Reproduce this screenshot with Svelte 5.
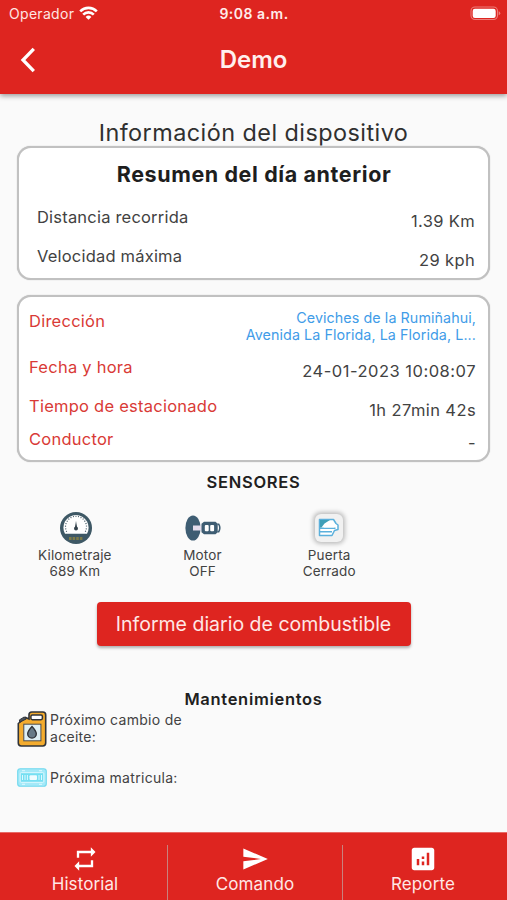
<script>
  const summary = [
    { label: 'Distancia recorrida', value: '1.39 Km' },
    { label: 'Velocidad máxima', value: '29 kph' }
  ];
  const details = [
    { label: 'Fecha y hora', value: '24-01-2023 10:08:07', cls: 'date' },
    { label: 'Tiempo de estacionado', value: '1h 27min 42s', cls: 'time' },
    { label: 'Conductor', value: '-', cls: 'driver' }
  ];
</script>

<div class="screen">
  <header>
    <div class="status">
      <div class="carrier">
        <span>Operador</span>
        <svg width="19" height="14" viewBox="0 0 19 14" fill="none" stroke="#fff" stroke-width="2.6">
          <path d="M1.2 5.3a11.7 11.7 0 0 1 16.6 0" />
          <path d="M4.2 8.6a7.5 7.5 0 0 1 10.6 0" />
          <path d="M9.5 13.8 6.6 10.9a4.1 4.1 0 0 1 5.8 0Z" fill="#fff" stroke="none" />
        </svg>
      </div>
      <div class="clock">9:08 a.m.</div>
      <div class="battery">
        <svg width="31" height="15" viewBox="0 0 31 15">
          <rect x="1" y="1" width="26.5" height="12.5" rx="4" fill="none" stroke="#ec7d79" stroke-width="1.1" />
          <rect x="2.7" y="2.7" width="23" height="9.2" rx="2.2" fill="#fff" />
          <path d="M28.7 5.2q1.6.7 1.6 2t-1.6 2Z" fill="#ec7d79" />
        </svg>
      </div>
    </div>
    <div class="appbar">
      <svg width="18" height="26" viewBox="0 0 18 26" fill="none" stroke="#fff" stroke-width="3.3">
        <path d="M14.8 1.8 4 13l10.8 11.2" />
      </svg>
      <h1>Demo</h1>
      <span></span>
    </div>
  </header>

  <main>
    <h2 class="title">Información del dispositivo</h2>

    <section class="card summary">
      <h3>Resumen del día anterior</h3>
      {#each summary as row}
        <div class="row"><span class="label">{row.label}</span><span class="value">{row.value}</span></div>
      {/each}
    </section>

    <section class="card details">
      <div class="row address">
        <span class="label">Dirección</span>
        <span class="link">Ceviches de la Rumiñahui,<br />Avenida La Florida, La Florida, L...</span>
      </div>
      {#each details as row}
        <div class="row {row.cls}"><span class="label">{row.label}</span><span class="value">{row.value}</span></div>
      {/each}
    </section>

    <h4 class="sensors-title">SENSORES</h4>
    <section class="sensors">
      <div class="sensor">
        <svg width="34" height="34" viewBox="0 0 34 34">
          <circle cx="17" cy="17" r="16" fill="#3e5865" />
          <path d="M6 22.8a12.6 12.6 0 1 1 22 0Z" fill="#fff" />
          <path d="M7.7 20.7a10.5 10.5 0 1 1 18.6 0" fill="none" stroke="#455a65" stroke-width="1.2" stroke-dasharray="1 1.6" />
          <path d="m17 10-1.2 7h2.4Z" fill="#35434d" />
          <circle cx="17" cy="17.5" r="2" fill="#35434d" />
          <path d="M10 27.6h14" stroke="#7c7a48" stroke-width="3" stroke-dasharray="2.6 1" />
        </svg>
        <span class="odometer">Kilometraje<br />689 Km</span>
      </div>
      <div class="sensor">
        <svg width="38" height="34" viewBox="0 0 38 34">
          <ellipse cx="9" cy="17" rx="7.6" ry="12.6" fill="#3e5d73" />
          <path d="M9 14.500h8.800v5H9Z" fill="#e4dcec" />
          <path d="M20 10.700h11.500l2.200 2v8.600l-2.200 2H20l-2.500-2v-8.600Z" fill="#3e5d73" />
          <path d="M33.500 13.200h1.200q2.300 3.800 0 7.600h-1.200" fill="none" stroke="#3e5d73" stroke-width="1.5" />
          <rect x="20.800" y="14" width="3.900" height="6.3" rx="1" fill="#fff" />
          <rect x="26.200" y="14" width="3.900" height="6.3" rx="1" fill="#fff" />
        </svg>
        <span>Motor<br />OFF</span>
      </div>
      <div class="sensor">
        <div class="door">
          <svg width="22" height="20" viewBox="0 0 22 20" fill="none" stroke="#5bb0dc" stroke-width="1.5" stroke-linejoin="round">
            <path d="M1.500 1.500H15.500L18 5.500l2 1.500v4.500l-3.500 1L14 17.500H1.500Z" fill="#fff" />
            <path d="M1.500 10.300H17.500M1.500 13.700H14" />
            <path d="M2 2H12L6.500 5.500 3.500 9.500H2Z" fill="#3f9fb8" stroke="none" />
            <path d="M5.500 9.500 9.500 5.500H13.500L16.500 9.500Z" fill="#fff" stroke="none" />
          </svg>
        </div>
        <span>Puerta<br />Cerrado</span>
      </div>
    </section>

    <button>Informe diario de combustible</button>

    <h4 class="maint-title">Mantenimientos</h4>
    <div class="maint oil">
      <svg width="30" height="36" viewBox="0 0 30 36">
        <path d="M1.3 12.5 8.5 6.5 12 8V3.8q0-2.8 2.8-2.8h11q2.9 0 2.9 2.9v28.2q0 2.9-2.9 2.9H4.2q-2.9 0-2.9-2.9Z" fill="#f4ac2e" stroke="#30343a" stroke-width="1.6" />
        <rect x="13.9" y="4" width="11.5" height="4.7" rx="1.4" fill="#fff" stroke="#30343a" stroke-width="1.5" />
        <path d="m2.4 8.9 5-3 2 2-6.7 3.3Z" fill="#4b535d" stroke="#30343a" />
        <rect x="6.8" y="13.2" width="17.1" height="16.6" fill="#dff0f5" stroke="#4a4d50" stroke-width="1" />
        <path d="M15 15.500q-4.3 4.600-4.3 7.300a4.3 4.3 0 0 0 8.6 0Q19.300 20.100 15 15.500Z" fill="#687b88" stroke="#30343a" stroke-width="1.4" />
      </svg>
      <span>Próximo cambio de<br />aceite:</span>
    </div>
    <div class="maint plate">
      <svg width="30" height="19" viewBox="0 0 30 19">
        <rect x=".7" y=".7" width="28.6" height="17.6" rx="2.6" fill="#a4e9f8" stroke="#71d9ee" stroke-width="1.1" />
        <rect x="3.2" y="4.7" width="23.6" height="9.600" rx="1" fill="#75dff2" stroke="#e8fbff" stroke-width=".9" />
        <path d="M5.500 7v5M8 7v5M10.400 7v5M22 7v5M24.500 7v5M5 2.700h3M22 2.700h3M5 16.300h3M22 16.300h3" stroke="#dff9ff" stroke-width="1" />
        <rect x="12.500" y="7.200" width="7.500" height="4.800" rx="1" fill="#effcff" />
      </svg>
      <span>Próxima matricula:</span>
    </div>
  </main>

  <nav>
    <div class="tab">
      <svg width="28" height="28" viewBox="0 0 24 24" fill="#fff"><path d="M7 7h10v3l4-4-4-4v3H5v6h2V7zm10 10H7v-3l-4 4 4 4v-3h12v-6h-2v4z" /></svg>
      <span>Historial</span>
    </div>
    <div class="tab">
      <svg width="28" height="28" viewBox="0 0 24 24" fill="#fff"><path d="M2.010 21 23 12 2.010 3 2 10l15 2-15 2z" /></svg>
      <span>Comando</span>
    </div>
    <div class="tab">
      <svg width="30" height="30" viewBox="0 0 24 24" fill="#fff"><path d="M19 3H5c-1.100 0-2 .9-2 2v14c0 1.100.9 2 2 2h14c1.100 0 2-.9 2-2V5c0-1.100-.9-2-2-2zM9 17H7v-5h2v5zm4 0h-2v-3h2v3zm0-5h-2v-2h2v2zm4 5h-2V7h2v10z" /></svg>
      <span>Reporte</span>
    </div>
  </nav>
</div>

<style>
  :global(body) { margin: 0; }
  .screen {
    width: 507px;
    height: 900px;
    display: flex;
    flex-direction: column;
    overflow: hidden;
    background: #fafafa;
    color: #424242;
    font-family: Inter, "Liberation Sans", sans-serif;
    white-space: nowrap;
  }
  svg { display: block; flex: none; }
  h1, h2, h3, h4 { margin: 0; }
  header {
    height: 94px;
    flex: none;
    background: #de2520;
    color: #fff;
    box-shadow: 0 2px 5px rgba(0, 0, 0, .38);
  }
  .status {
    display: grid;
    grid-template-columns: 1fr auto 1fr;
    align-items: center;
    height: 28px;
    padding: 0 6px 0 9px;
    font-size: 14px;
    line-height: 28px;
  }
  .carrier { display: flex; align-items: center; gap: 5px; color: #ffe5e3; letter-spacing: .3px; }
  .carrier svg { margin-top: -3px; }
  .clock { margin-left: -2px; font-weight: 600; letter-spacing: .5px; color: #ffeceb; }
  .battery { justify-self: end; margin-top: -2px; }
  .appbar {
    display: grid;
    grid-template-columns: 1fr auto 1fr;
    align-items: center;
    height: 64px;
    padding: 0 19px;
  }
  h1 { font-size: 24px; line-height: 64px; font-weight: 600; color: #ffefee; }
  main { flex: 1; padding: 0 17px; }
  .title {
    margin-top: 24px;
    height: 28px;
    line-height: 30px;
    text-align: center;
    font-size: 23.400px;
    font-weight: 400;
    letter-spacing: .46px;
    color: #303030;
  }
  .card {
    box-sizing: border-box;
    background: #fff;
    border: 2px solid #c1c1c1;
    border-radius: 14px;
    box-shadow: 0 0 1px #aaa;
  }
  .summary { height: 134px; padding: 10px 13px 0 18px; }
  h3 {
    line-height: 32px;
    text-align: center;
    font-size: 21.500px;
    font-weight: 700;
    letter-spacing: .6px;
    color: #1e1e1e;
    padding-right: 4px;
  }
  .row { display: flex; justify-content: space-between; font-size: 16.5px; line-height: 20px; }
  .value { padding-top: 4px; letter-spacing: .35px; }
  .summary .row { height: 39px; }
  .summary h3 + .row { margin-top: 17px; }
  .label { letter-spacing: .2px; }
  .details { margin-top: 15px; height: 167px; padding: 14px 12px 0 10px; }
  .details .label { color: #d93a36; letter-spacing: .25px; }
  .address { height: 46px; }
  .link { margin-top: -2px; text-align: right; font-size: 14.300px; line-height: 17px; color: #419ce8; letter-spacing: .08px; }
  .date { height: 39px; }
  .date .value { letter-spacing: .5px; }
  .time { height: 33px; }
  .time .value { letter-spacing: .4px; }
  .sensors-title, .maint-title { text-align: center; color: #202020; font-size: 16.500px; line-height: 20px; font-weight: 600; }
  .sensors-title { margin-top: 10px; letter-spacing: .75px; }
  .sensors { display: flex; margin: 19px 0 0 -4.500px; }
  .sensor { width: 126.700px; display: flex; flex-direction: column; align-items: center; text-align: center; font-size: 13.500px; line-height: 16px; letter-spacing: .15px; }
  .sensor span { margin-top: 2px; }
  .sensor .odometer { margin-right: 2px; }
  .door {
    width: 28px;
    height: 28px;
    margin: 3px;
    display: flex;
    align-items: center;
    justify-content: center;
    border-radius: 6px;
    background: #f1f1f1;
    box-shadow: 0 0 4px 2px #bdbdbd;
  }
  button {
    display: block;
    width: 314px;
    height: 44px;
    margin: 23px auto 0;
    padding: 0;
    border: 0;
    border-radius: 4px;
    background: #de2520;
    box-shadow: 0 2px 3px rgba(0, 0, 0, .3);
    color: #ffe7e5;
    font: 400 19.500px/44px Inter, sans-serif;
    letter-spacing: 0;
  }
  .maint-title { margin-top: 43px; letter-spacing: .7px; }
  .maint { display: flex; gap: 3px; font-size: 14px; line-height: 17px; letter-spacing: .3px; }
  .oil { margin-top: 2px; height: 57px; }
  .plate { align-items: center; height: 19px; }
  nav {
    display: flex;
    flex: none;
    height: 67px;
    border-top: 1px solid #e76a66;
    background: #de2520;
    color: #ffe8e6;
  }
  .tab {
    position: relative;
    width: 167px;
    box-sizing: border-box;
    display: flex;
    flex-direction: column;
    align-items: center;
    padding-left: 3px;
    font-size: 17px;
    line-height: 22px;
    letter-spacing: .1px;
  }
  .tab svg { height: 30px; margin: 11px 0 -1px; }
  .tab + .tab { width: 175px; padding-left: 1px; }
  .tab + .tab + .tab { width: 165px; padding: 0 3px 0 0; }
  .tab + .tab::before {
    content: "";
    position: absolute;
    left: 0;
    top: 12px;
    bottom: 0;
    width: 1px;
    background: #c9827d;
  }
</style>
